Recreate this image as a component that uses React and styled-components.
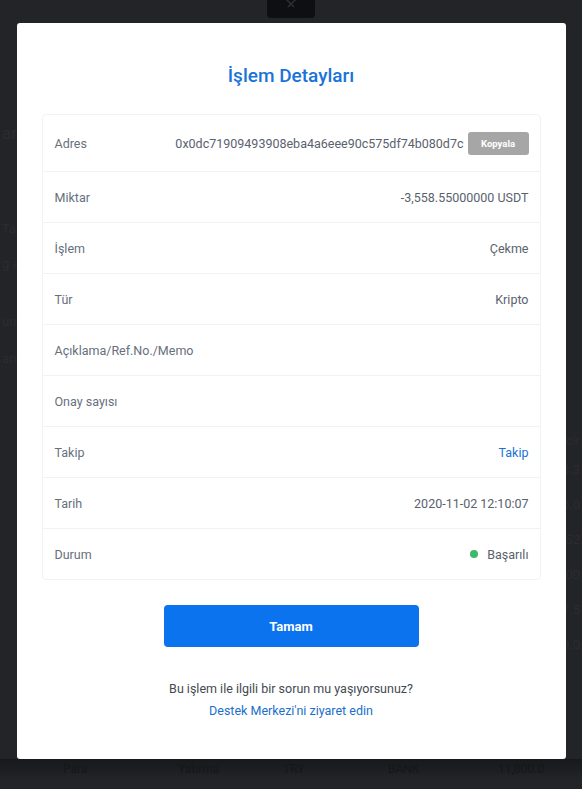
import React from "react";
import styled, { createGlobalStyle } from "styled-components";

const GlobalStyle = createGlobalStyle`
  html, body {
    margin: 0;
    padding: 0;
    background: #232427;
    font-family: Roboto, "Noto Sans", sans-serif;
  }
`;

const Page = styled.div`
  position: relative;
  width: 582px;
  height: 789px;
  overflow: hidden;
  background: #232427;
`;

const Ghost = styled.div`
  display: flex;
  flex-direction: column;
  padding-top: 120px;
  color: #2b2c30;
  font-size: 13px;
`;

const GhostRow = styled.div`
  display: flex;
  justify-content: space-between;
  height: ${(p) => p.$h || 35}px;
  margin-top: ${(p) => p.$mt || 0}px;
  align-items: center;
  padding: 0 2px;
`;

const BottomStrip = styled.div`
  position: absolute;
  left: 0;
  right: 0;
  top: 759px;
  height: 30px;
  background: linear-gradient(#17191c 0, #1d1f22 12px, #232427 20px);
  display: grid;
  grid-template-columns: 115px 105px 105px 110px 1fr;
  padding-left: 63px;
  color: #15171a;
  font-size: 12px;
  line-height: 20px;
`;

const CloseTab = styled.button`
  position: absolute;
  top: 0;
  left: 267px;
  width: 48px;
  height: 18px;
  border: 0;
  padding: 0;
  background: #0e0f12;
  border-radius: 0 0 4px 4px;
  display: flex;
  justify-content: center;
  align-items: flex-start;
  overflow: hidden;
`;

const Overlay = styled.div`
  position: absolute;
  inset: 0;
  padding-top: 23px;
  display: flex;
  justify-content: center;
  align-items: flex-start;
`;

const Modal = styled.div`
  width: 549px;
  height: 736px;
  box-sizing: border-box;
  background: #fff;
  border-radius: 3px;
  padding: 39px 25px 0 25px;
  display: flex;
  flex-direction: column;
  align-items: center;
`;

const Title = styled.h2`
  margin: 0;
  font-size: 19px;
  line-height: 28px;
  font-weight: 500;
  color: #1a73d8;
`;

const Card = styled.div`
  margin-top: 24px;
  width: 100%;
  box-sizing: border-box;
  border: 1px solid #f1f2f4;
  border-radius: 4px;
`;

const Row = styled.div`
  display: flex;
  align-items: center;
  justify-content: space-between;
  height: ${(p) => (p.$tall ? 56 : 50)}px;
  padding: 0 11px 0 12px;
  border-top: ${(p) => (p.$first ? "0" : "1px solid #f1f2f4")};
  font-size: 12.5px;
`;

const Label = styled.span`
  color: #67707d;
`;

const Value = styled.span`
  display: flex;
  align-items: center;
  gap: 4px;
  color: ${(p) => (p.$link ? "#1a73d8" : "#5a626d")};
`;

const CopyButton = styled.button`
  width: 61px;
  height: 23px;
  border: 0;
  border-radius: 3px;
  background: #a6a6a6;
  color: #fff;
  font-family: inherit;
  font-size: 9.5px;
  font-weight: 700;
  padding: 0;
`;

const Dot = styled.span`
  width: 8px;
  height: 8px;
  border-radius: 50%;
  background: #3cb96a;
  margin-right: 5px;
`;

const OkButton = styled.button`
  margin-top: 25px;
  width: 255px;
  height: 42px;
  border: 0;
  border-radius: 4px;
  background: #0b73ee;
  color: #fff;
  font-family: inherit;
  font-size: 13px;
  font-weight: 700;
`;

const Help = styled.p`
  margin: 31px 0 0;
  font-size: 12.5px;
  line-height: 22px;
  color: #444a52;
  text-align: center;
`;

const HelpLink = styled.a`
  display: block;
  color: #1a6fcc;
  text-decoration: none;
`;

const rows = [
  { label: "Miktar", value: "-3,558.55000000 USDT" },
  { label: "İşlem", value: "Çekme" },
  { label: "Tür", value: "Kripto" },
  { label: "Açıklama/Ref.No./Memo", value: "" },
  { label: "Onay sayısı", value: "" },
  { label: "Takip", value: "Takip", link: true },
  { label: "Tarih", value: "2020-11-02 12:10:07" },
];

export default function App() {
  return (
    <Page>
      <GlobalStyle />
      <Ghost>
        <GhostRow $h={26}><span style={{ fontSize: 17 }}>ar.</span><span /></GhostRow>
        <GhostRow $h={24} $mt={70}><span>Ta</span><span /></GhostRow>
        <GhostRow $h={24} $mt={11}><span>g a</span><span /></GhostRow>
        <GhostRow $h={24} $mt={34}><span>um</span><span /></GhostRow>
        <GhostRow $h={24} $mt={13}><span>amı</span><span /></GhostRow>
        <GhostRow $h={24} $mt={58}><span /><span>cir</span></GhostRow>
        <GhostRow><span /><span>33.3</span></GhostRow>
        <GhostRow><span /><span>50.0</span></GhostRow>
        <GhostRow><span /><span>5.52</span></GhostRow>
        <GhostRow><span /><span>000</span></GhostRow>
        <GhostRow><span /><span>77.5</span></GhostRow>
        <GhostRow><span /><span>00.0</span></GhostRow>
      </Ghost>
      <BottomStrip>
        <span>Para</span>
        <span>Yatırma</span>
        <span>TRY</span>
        <span>BANK</span>
        <span>11,000.0</span>
      </BottomStrip>
      <CloseTab aria-label="Kapat">
        <svg width="24" height="14" viewBox="0 0 24 14">
          <path d="M4 -4 L15 7 M20 -4 L9 7" stroke="#2c2e33" strokeWidth="1.5" fill="none" />
        </svg>
      </CloseTab>
      <Overlay>
        <Modal>
          <Title>İşlem Detayları</Title>
          <Card>
            <Row $first $tall>
              <Label>Adres</Label>
              <Value>
                0x0dc71909493908eba4a6eee90c575df74b080d7c
                <CopyButton>Kopyala</CopyButton>
              </Value>
            </Row>
            {rows.map((r) => (
              <Row key={r.label}>
                <Label>{r.label}</Label>
                <Value $link={r.link}>{r.value}</Value>
              </Row>
            ))}
            <Row>
              <Label>Durum</Label>
              <Value>
                <Dot />
                Başarılı
              </Value>
            </Row>
          </Card>
          <OkButton>Tamam</OkButton>
          <Help>
            Bu işlem ile ilgili bir sorun mu yaşıyorsunuz?
            <HelpLink href="#">Destek Merkezi'ni ziyaret edin</HelpLink>
          </Help>
        </Modal>
      </Overlay>
    </Page>
  );
}
